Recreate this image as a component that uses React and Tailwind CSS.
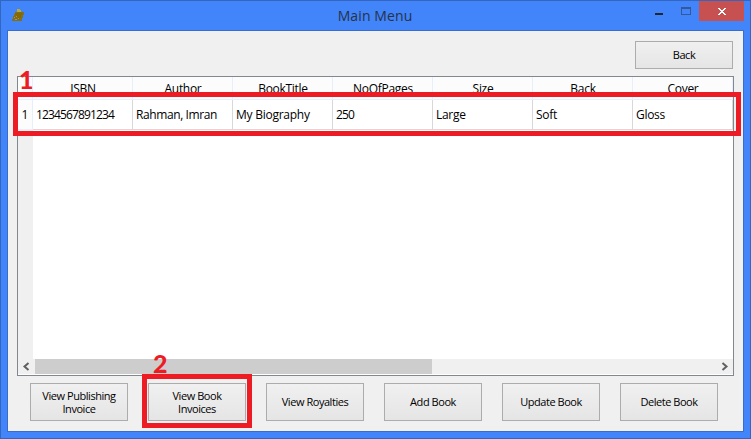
const columns = [
  { name: "ISBN", value: "1234567891234", tracking: "tracking-[-0.86px]" },
  { name: "Author", value: "Rahman, Imran", tracking: "tracking-[-0.4px]" },
  { name: "BookTitle", value: "My Biography", tracking: "tracking-[-0.25px]" },
  { name: "NoOfPages", value: "250", tracking: "tracking-[-0.86px]" },
  { name: "Size", value: "Large", tracking: "tracking-[-0.3px]" },
  { name: "Back", value: "Soft", tracking: "tracking-[-0.3px]" },
  { name: "Cover", value: "Gloss", tracking: "tracking-[-0.3px]" },
];

const actions = [
  "View Publishing\nInvoice",
  "View Book\nInvoices",
  "View Royalties",
  "Add Book",
  "Update Book",
  "Delete Book",
];

function Button({ label, className }) {
  return (
    <button
      className={`w-[98px] shrink-0 border border-[#acacac] bg-linear-to-b from-[#f0f0f0] to-[#e5e5e5] pb-px text-center text-[11px] leading-[13px] tracking-[-0.45px] whitespace-pre ${className}`}
    >
      {label}
    </button>
  );
}

function TitleBar() {
  return (
    <header className="flex h-[29px] shrink-0 items-start">
      <div className="w-[70px] pt-2 pl-[11px]">
        <svg width="12" height="12" viewBox="0 0 12 12" shapeRendering="crispEdges">
          <path d="M3 3h9v3h-1v3h-1v3H0v-2h1V7h1V5h1z" fill="#80701c" />
          <path d="M5 0h3v1h1v2H5z" fill="#b8ac30" />
          <path d="M3 4h7v2H9v3H8v1H6V8H4V6H3z" fill="#886800" />
          <path d="M2 8h1v1H2zM3 10h2v1H3zM6 9h1v1H6zM4 7h1v1H4z" fill="#a6925a" />
        </svg>
      </div>
      <h1 className="flex-1 pt-[5px] pl-[24px] text-center text-[14px] leading-[20px] tracking-[0.1px] text-[#263347]">
        Main Menu
      </h1>
      <div className="flex h-5">
        <div className="w-[26px] pt-[12px]">
          <div className="h-[2px] w-2 bg-[#20252e]" />
        </div>
        <div className="w-[18px] pt-[6px]">
          <div className="h-2 w-[10px] border border-t-2 border-[#355898]" />
        </div>
        <div className="flex h-5 w-[45px] items-center justify-center bg-[#c75050]">
          <svg width="8" height="7" viewBox="0 0 8 7" shapeRendering="crispEdges" fill="white">
            <path d="M0 0h2v1h1v1h2V1h1V0h2v1H7v1H6v1H5v1h1v1h1v1h1v1H6V6H5V5H3v1H2v1H0V6h1V5h1V4h1V3H2V2H1V1H0z" />
          </svg>
        </div>
        <div className="w-[6px]" />
      </div>
    </header>
  );
}

function Table() {
  return (
    <div className="mt-[7px] ml-[9px] flex h-[300px] w-[717px] flex-col border border-[#828790] bg-white">
      <div className="flex h-[23px] shrink-0 border-b border-[#e5effd] bg-[#fcfcfc]">
        <div className="w-[15px] border-r border-[#e5effd]" />
        {columns.map((c) => (
          <div
            key={c.name}
            className="w-[100px] border-r border-[#e5effd] pt-[5px] pl-px text-center leading-[14px] tracking-[-0.3px]"
          >
            {c.name}
          </div>
        ))}
      </div>
      <div className="flex h-[30px] shrink-0">
        <div className="w-[15px] border-r border-b border-[#e5effd] bg-[#fcfcfc] text-center leading-[30px]">1</div>
        {columns.map((c) => (
          <div key={c.name} className={`w-[100px] border-r border-b border-[#d8d8d8] pl-[3px] leading-[30px] ${c.tracking}`}>
            {c.value}
          </div>
        ))}
      </div>
      <div className="w-[15px] flex-1 bg-[#f0f0f0]" />
      <div className="mb-px flex h-[15px] shrink-0 items-center bg-[#f0f0f0]">
        <svg className="w-[17px]" height="15" viewBox="0 0 17 15" fill="none" stroke="#606060" strokeWidth="2">
          <path d="M10.5 4l-4 3.5 4 3.5" />
        </svg>
        <div className="h-[15px] w-[397px] bg-[#cdcdcd]" />
        <div className="flex-1" />
        <svg className="w-[17px]" height="15" viewBox="0 0 17 15" fill="none" stroke="#606060" strokeWidth="2">
          <path d="M6.5 4l4 3.5-4 3.5" />
        </svg>
      </div>
    </div>
  );
}

export default function App() {
  return (
    <div className="relative flex h-[439px] w-[751px] flex-col overflow-hidden border border-[#3566bf] bg-[#4284fa] font-['Open_Sans','Noto_Sans',sans-serif] text-[12px] text-black">
      <TitleBar />
      <main className="ml-[6px] flex h-[402px] w-[737px] flex-col border border-[#386dcb] bg-[#f0f0f0]">
        <div className="flex justify-end pt-[10px] pr-[10px]">
          <Button label="Back" className="h-7" />
        </div>
        <Table />
        <div className="mt-[7px] ml-[22px] flex gap-5">
          {actions.map((label) => (
            <Button key={label} label={label} className="h-[38px]" />
          ))}
        </div>
      </main>
      <div className="absolute top-[91px] left-[12px] h-[44px] w-[728px] border-5 border-[#ed1c24]" />
      <div className="absolute top-[373px] left-[141px] h-[54px] w-[110px] border-5 border-[#ed1c24]" />
      <div className="absolute top-[65px] left-[18px] font-[Lato,sans-serif] text-[25px] leading-[27px] font-black text-[#ed1c24]">
        1
      </div>
      <div className="absolute top-[349px] left-[152px] font-[Lato,sans-serif] text-[25px] leading-[27px] font-black text-[#ed1c24]">
        2
      </div>
    </div>
  );
}
